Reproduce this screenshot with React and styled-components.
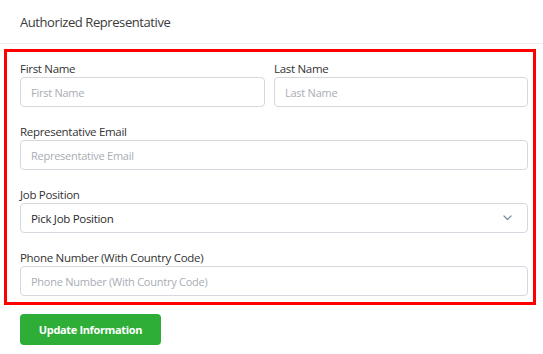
import React from "react";
import styled, { createGlobalStyle } from "styled-components";

const Global = createGlobalStyle`
  html, body { margin: 0; padding: 0; background: #fff; }
  body { font-family: "Open Sans", "Noto Sans", sans-serif; color: #333; }
  * { box-sizing: border-box; }
`;

const Page = styled.div`
  width: 543px;
  height: 354px;
  overflow: hidden;
  background: #fff;
`;

const Header = styled.div`
  height: 44px;
  padding: 0 20px;
  display: flex;
  align-items: center;
  border-bottom: 1px solid #eeeeee;
  font-size: 13px;
  color: #3a3a3a;
  letter-spacing: -0.42px;
`;

const FormBox = styled.div`
  margin: 5px 0 0 4px;
  width: 532px;
  border: 3px solid #ff0000;
  padding: 8px 5px 6px 13px;
  display: flex;
  flex-direction: column;
  gap: 16px;
`;

const Row = styled.div`
  display: grid;
  grid-template-columns: ${(p) => p.$cols || "1fr"};
  column-gap: 9px;
`;

const Field = styled.div`
  display: flex;
  flex-direction: column;
`;

const Label = styled.label`
  font-size: 11.5px;
  line-height: 17px;
  font-weight: 500;
  color: #333;
  letter-spacing: -0.3px;
`;

const Input = styled.input`
  height: 30px;
  width: 100%;
  border: 1px solid #d5d8de;
  border-radius: 4px;
  padding: 0 10px;
  font-family: inherit;
  font-size: 11px;
  color: #333;
  outline: none;
  letter-spacing: -0.25px;
  &::placeholder { color: #a9adb5; }
`;

const Select = styled.div`
  height: 30px;
  border: 1px solid #d5d8de;
  border-radius: 4px;
  padding: 0 15px 0 10px;
  display: flex;
  align-items: center;
  justify-content: space-between;
  font-size: 11.5px;
  color: #2b2b2b;
  letter-spacing: -0.3px;
`;

const Chevron = () => (
  <svg width="9" height="6" viewBox="0 0 9 6" fill="none">
    <path d="M1 1l3.5 3.5L8 1" stroke="#7a8aa0" strokeWidth="1.2" strokeLinecap="round" strokeLinejoin="round" />
  </svg>
);

const Button = styled.button`
  margin: 9px 0 0 20px;
  width: 141px;
  height: 31px;
  border: none;
  border-radius: 4px;
  background: #2eae37;
  color: #fff;
  font-family: inherit;
  font-size: 11px;
  font-weight: 700;
  letter-spacing: -0.35px;
  cursor: pointer;
`;

export default function App() {
  return (
    <Page>
      <Global />
      <Header>Authorized Representative</Header>
      <FormBox>
        <Row $cols="245px 254px">
          <Field>
            <Label>First Name</Label>
            <Input placeholder="First Name" />
          </Field>
          <Field>
            <Label>Last Name</Label>
            <Input placeholder="Last Name" />
          </Field>
        </Row>
        <Row>
          <Field>
            <Label>Representative Email</Label>
            <Input placeholder="Representative Email" />
          </Field>
        </Row>
        <Row>
          <Field>
            <Label>Job Position</Label>
            <Select>
              <span>Pick Job Position</span>
              <Chevron />
            </Select>
          </Field>
        </Row>
        <Row>
          <Field>
            <Label>Phone Number (With Country Code)</Label>
            <Input placeholder="Phone Number (With Country Code)" />
          </Field>
        </Row>
      </FormBox>
      <Button>Update Information</Button>
    </Page>
  );
}
